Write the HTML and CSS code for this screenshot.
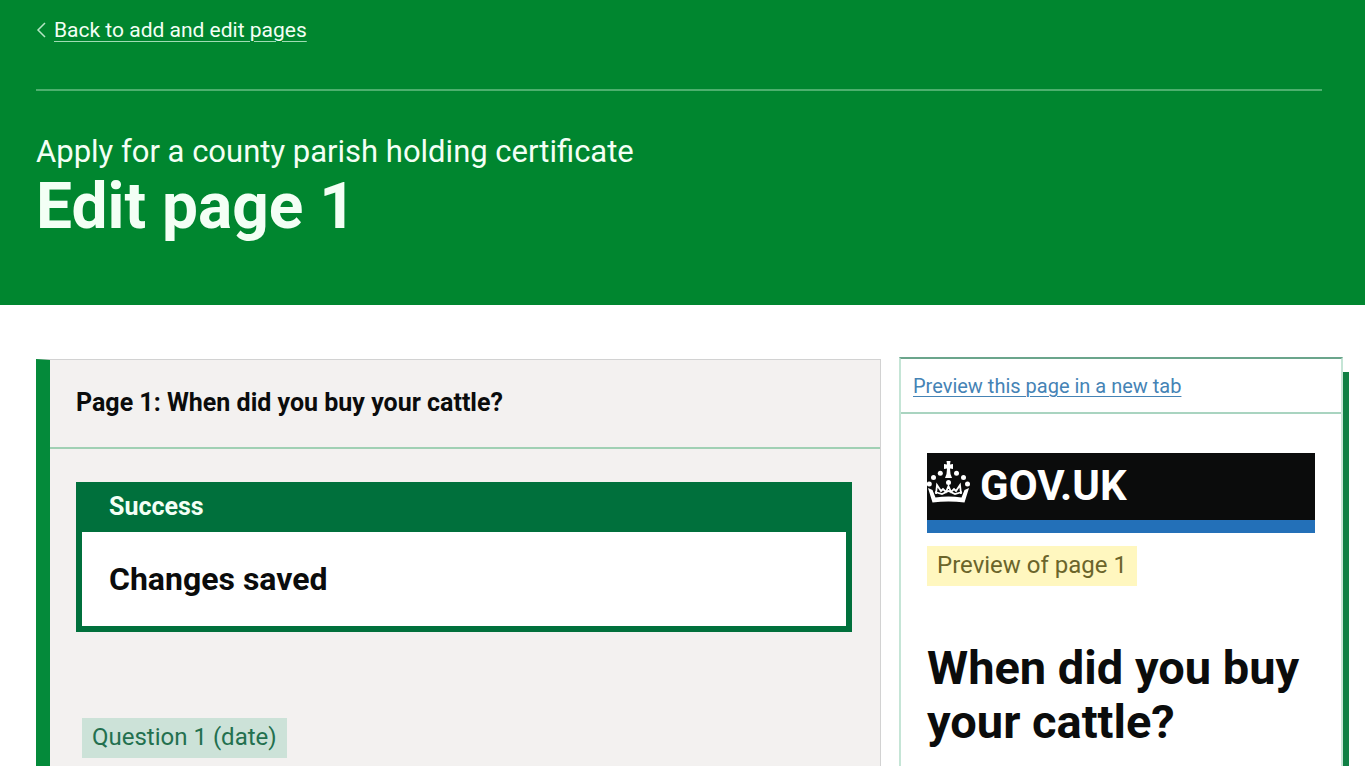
FILE: index.html
```html
<!DOCTYPE html>
<html lang="en">
<head>
<meta charset="utf-8">
<title>Edit page 1</title>
<meta name="viewport" content="width=device-width, initial-scale=1">
<link rel="stylesheet" href="styles.css">
</head>
<body class="page">
<header class="masthead">
  <nav class="masthead-nav">
    <svg class="chevron" viewBox="0 0 10 16" aria-hidden="true"><path d="M9 1 2 8l7 7" fill="none" stroke="currentColor" stroke-width="1.5"/></svg>
    <a class="back-link" href="#">Back to add and edit pages</a>
  </nav>
  <div class="masthead-title">
    <p class="caption">Apply for a county parish holding certificate</p>
    <h1 class="title">Edit page 1</h1>
  </div>
</header>
<main class="columns">
  <section class="editor">
    <h2 class="editor-heading">Page 1: When did you buy your cattle?</h2>
    <div class="editor-body">
      <div class="notice" role="status">
        <h3 class="notice-title">Success</h3>
        <p class="notice-text">Changes saved</p>
      </div>
      <span class="tag tag-question">Question 1 (date)</span>
    </div>
  </section>
  <aside class="preview">
    <div class="preview-bar"><a class="preview-link" href="#">Preview this page in a new tab</a></div>
    <div class="preview-body">
      <div class="govuk">
        <svg class="crown" viewBox="0 0 43 42" fill="currentColor" aria-hidden="true">
          <path d="M19.500 0h4l-.5 3.500L26 3v5l-3-.5.5 5.500 1.500 4h-7l1.500-4 .5-5.500-3 .5V3l3 .5z"/>
          <circle cx="2.300" cy="23" r="2.500"/><circle cx="6.500" cy="16.500" r="2.500"/><circle cx="13.300" cy="12.300" r="2.500"/>
          <circle cx="29.500" cy="12.300" r="2.500"/><circle cx="36.500" cy="16.500" r="2.500"/><circle cx="40.500" cy="23" r="2.500"/>
          <circle cx="21.500" cy="21.500" r="2.500"/>
          <path d="M1 27l4.500 2 3 7.500q13-2 26 0l3-7.500L42 27l-4.500 14.500q-16-2-32 0z"/>
          <path d="M9 33l1-9 4 6 2-2 3 3 2.500-6 2.500 6 3-3 2 2 4-6 1 9M8 31l7 2 6.500-3 6.500 3 7-2" fill="none" stroke="currentColor" stroke-width="1.800"/>
        </svg>
        <span class="wordmark">GOV.UK</span>
      </div>
      <span class="tag tag-preview">Preview of page 1</span>
      <h2 class="question">When did you buy your cattle?</h2>
    </div>
  </aside>
</main>
</body>
</html>
```
FILE: styles.css
```css
* { box-sizing: border-box; }
h1, h2, h3, p { margin: 0; }
.page {
  margin: 0;
  padding: 0 3px 4px 0;
  min-height: 100vh;
  display: flex;
  flex-direction: column;
  font-family: Roboto, "Liberation Sans", sans-serif;
  color: #0b0c0c;
  background: #fff;
}
.masthead {
  background: #00862f;
  color: #f3fff5;
  padding: 0 43px 64px 36px;
}
.masthead-nav {
  display: flex;
  align-items: center;
  gap: 8px;
  height: 91px;
  padding-bottom: 30px;
  border-bottom: 2px solid #4db06e;
}
.chevron { width: 10px; height: 16px; color: #b5e6c4; }
.back-link {
  color: inherit;
  font-size: 21px;
  line-height: 24px;
  text-decoration-color: #9fdcb3;
  text-decoration-thickness: 1px;
  text-underline-offset: 4px;
}
.masthead-title { padding-top: 41px; }
.caption { font-size: 31px; line-height: 40px; }
.title { font-size: 64px; line-height: 69px; }
.columns {
  flex: 1;
  display: grid;
  grid-template-columns: 845fr 444fr;
  gap: 18px;
  padding: 52px 22px 0 36px;
}
.editor {
  margin-top: 2px;
  background: #f3f1f0;
  border: solid #d2d2d2;
  border-width: 1px 1px 0 0;
  border-left: 14px solid #048a3a;
}
.editor-heading {
  padding: 27px 26px 28px;
  font-size: 25px;
  line-height: 32px;
  border-bottom: 2px solid #a0d0b4;
}
.editor-body { padding: 33px 28px 0 26px; }
.notice {
  background: #fff;
  border: 6px solid #00703c;
  border-top: 0;
  margin-bottom: 86px;
}
.notice-title {
  background: #00703c;
  color: #f3fff5;
  padding: 9px 27px;
  font-size: 25px;
  line-height: 32px;
}
.notice-text {
  padding: 27px;
  font-size: 32px;
  line-height: 40px;
  font-weight: 700;
}
.tag {
  display: inline-block;
  padding: 3px 10px 5px;
  font-size: 24px;
  line-height: 32px;
}
.tag-question { margin-left: 6px; background: #cce2d8; color: #23704f; }
.tag-preview { background: #fff7bf; color: #6b652b; }
.preview {
  border: 2px solid #c5e5d6;
  border-top-color: #6ba58c;
  border-bottom: 0;
  box-shadow: 6px 15px 0 #108044;
  clip-path: inset(0 -6px 0 0);
}
.preview-bar {
  padding: 12px 12px 11px;
  border-bottom: 2px solid #a9d4c0;
}
.preview-link {
  display: block;
  width: fit-content;
  color: #4583b5;
  font-size: 20px;
  line-height: 30px;
  text-decoration-thickness: 1px;
  text-underline-offset: 3px;
}
.preview-body { padding: 39px 26px 0; }
.govuk {
  display: flex;
  gap: 10px;
  height: 80px;
  margin-bottom: 13px;
  padding-top: 8px;
  background: #0b0c0c;
  border-bottom: 13px solid #2370b8;
  color: #fff;
}
.crown { width: 43px; height: 42px; }
.wordmark { font-size: 42px; line-height: 50px; font-weight: 700; }
.question {
  margin-top: 55px;
  font-size: 47px;
  line-height: 54px;
}
```
